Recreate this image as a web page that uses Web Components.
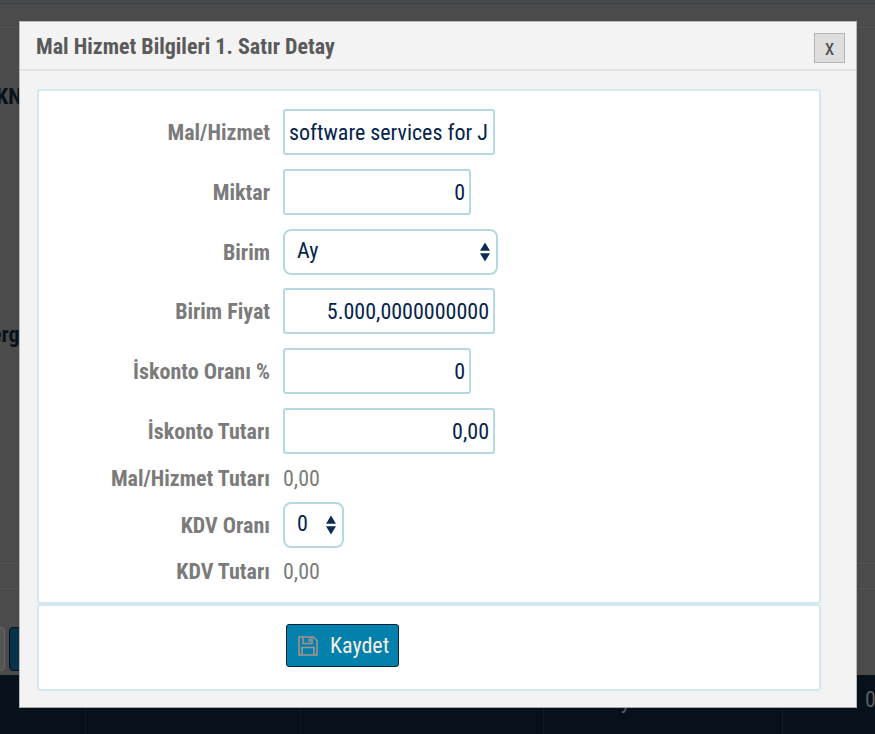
<!DOCTYPE html>
<html lang="tr">
<head>
<meta charset="utf-8">
<title>Mal Hizmet Bilgileri</title>
<style>
  html, body { margin: 0; padding: 0; }
  body { width: 875px; height: 734px; overflow: hidden; background: #4b4b4b; font-family: Roboto, "Liberation Sans", sans-serif; }
</style>
</head>
<body>
<page-backdrop></page-backdrop>
<detail-dialog heading="Mal Hizmet Bilgileri 1. Satır Detay">
  <form-row label="Mal/Hizmet"><text-box width="212" value="software services for J" align="left"></text-box></form-row>
  <form-row label="Miktar"><text-box width="188" value="0"></text-box></form-row>
  <form-row label="Birim"><select-box width="215" value="Ay"></select-box></form-row>
  <form-row label="Birim Fiyat"><text-box width="212" value="5.000,0000000000"></text-box></form-row>
  <form-row label="İskonto Oranı %"><text-box width="188" value="0"></text-box></form-row>
  <form-row label="İskonto Tutarı"><text-box width="212" value="0,00"></text-box></form-row>
  <form-row label="Mal/Hizmet Tutarı"><span class="plain">0,00</span></form-row>
  <form-row label="KDV Oranı"><select-box width="61" value="0"></select-box></form-row>
  <form-row label="KDV Tutarı"><span class="plain">0,00</span></form-row>
  <save-button slot="footer">Kaydet</save-button>
</detail-dialog>

<script>
const condensed = `font-family: "Roboto Condensed", Roboto, "Liberation Sans", sans-serif; font-stretch: 75%;`;

class PageBackdrop extends HTMLElement {
  constructor() {
    super();
    this.attachShadow({ mode: 'open' }).innerHTML = `
      <style>
        :host { display: block; position: absolute; inset: 0; overflow: hidden; background: #4b4b4b; }
        .top { height: 3px; background: #44484b; border-bottom: 1px solid #3a3e41; }
        .rule { position: absolute; left: 0; right: 0; height: 1px; background: #545454; }
        .foot { position: absolute; left: 0; right: 0; top: 675px; bottom: 0; background: #06111b; }
        .foot i { position: absolute; top: 0; bottom: 0; width: 1px; background: #0f1a24; }
        .txt { position: absolute; ${condensed} font-weight: 700; color: #07121c; font-size: 22px; }
        .btn { position: absolute; top: 627px; height: 44px; border-radius: 4px; box-sizing: border-box; }
        .grey { position: absolute; ${condensed} color: #5a5e62; font-size: 22px; }
      </style>
      <div class="top"></div>
      <div class="rule" style="top:27px"></div>
      <div class="rule" style="top:563px"></div>
      <div class="rule" style="top:588px"></div>
      <span class="txt" style="left:-4px;top:84px">KN</span>
      <span class="txt" style="left:-9px;top:322px">erg</span>
      <div class="btn" style="left:-20px;width:25px;background:#555;border:1px solid #666"></div>
      <div class="btn" style="left:9px;width:30px;background:#06334a;border:1px solid #03111c"></div>
      <div class="foot">
        <i style="left:85px"></i><i style="left:300px"></i><i style="left:543px"></i><i style="left:782px"></i>
      </div>
      <span class="grey" style="left:621px;top:688px">y</span>
      <span class="grey" style="left:865px;top:687px">0</span>
    `;
  }
}

class DetailDialog extends HTMLElement {
  constructor() {
    super();
    const shadow = this.attachShadow({ mode: 'open' });
    const heading = this.getAttribute('heading') || '';
    shadow.innerHTML = `
      <style>
        :host { display: flex; flex-direction: column; box-sizing: border-box; position: absolute; left: 19px; top: 21px; width: 838px; height: 687px; background: #f3f3f3; border: 1px solid #b8b8b8; border-bottom-color: #a8a8a8; }
        header { display: flex; align-items: center; justify-content: space-between; height: 49px; box-sizing: border-box; border-bottom: 2px solid #e2e2e2; padding: 2px 11px 0 16px; flex: none; }
        h1 { margin: 0; ${condensed} font-size: 22px; font-weight: 700; color: #5a5a5a; }
        button { width: 31px; height: 30px; margin-top: 3px; box-sizing: border-box; background: #dedede; border: 1px solid #b5b5b5; color: #4e4e4e; ${condensed} font-size: 22px; font-weight: 400; line-height: 24px; padding: 0; }
        .panel { background: #fff; border: 2px solid #d3e8f0; border-radius: 3px; margin: 0 35px 0 17px; box-sizing: border-box; flex: none; }
        .body { margin-top: 18px; height: 515px; padding: 18px 0 0; display: flex; flex-direction: column; gap: 13.8px; }
        .foot { height: 87px; display: flex; align-items: flex-start; padding: 18px 0 0 247px; }
      </style>
      <header><h1>${heading}</h1><button>x</button></header>
      <div class="panel body"><slot></slot></div>
      <div class="panel foot"><slot name="footer"></slot></div>
    `;
  }
}

class FormRow extends HTMLElement {
  constructor() {
    super();
    const shadow = this.attachShadow({ mode: 'open' });
    shadow.innerHTML = `
      <style>
        :host { display: grid; grid-template-columns: 231px auto; column-gap: 13px; align-items: center; justify-content: start; color: #7b7b7b; ${condensed} font-size: 22px; line-height: 22px; }
        label { text-align: right; font-weight: 700; color: #7b7b7b; white-space: nowrap; margin-bottom: -2px; }
        ::slotted(.plain) { color: #7b7b7b; font-weight: 400; margin-bottom: -2px; }
      </style>
      <label>${this.getAttribute('label')}</label>
      <slot></slot>
    `;
  }
}

class TextBox extends HTMLElement {
  constructor() {
    super();
    const shadow = this.attachShadow({ mode: 'open' });
    const width = this.getAttribute('width');
    const align = this.getAttribute('align') || 'right';
    shadow.innerHTML = `
      <style>
        :host { display: flex; align-items: center; box-sizing: border-box; width: ${width}px; height: 46px; background: #fff; border: 2px solid #b5d8e5; border-radius: 3px; padding: 2px 4px 0 4px; justify-content: ${align === 'left' ? 'flex-start' : 'flex-end'}; color: #04234b; ${condensed} font-size: 22px; overflow: hidden; white-space: nowrap; }
      </style>
      ${this.getAttribute('value')}
    `;
  }
}

class SelectBox extends HTMLElement {
  constructor() {
    super();
    const shadow = this.attachShadow({ mode: 'open' });
    shadow.innerHTML = `
      <style>
        :host { display: flex; align-items: center; justify-content: space-between; box-sizing: border-box; width: ${this.getAttribute('width')}px; height: 46px; background: #fff; border: 2px solid #b5d8e5; border-radius: 8px; padding: 0 5px 0 12px; color: #04234b; ${condensed} font-size: 22px; }
        span { padding-bottom: 2px; }
        svg { display: block; }
      </style>
      <span>${this.getAttribute('value')}</span>
      <svg width="12" height="20" viewBox="0 0 12 20"><path d="M6 0.5l5 8.2H1zM1 11.3h10l-5 8.2z" fill="#0b2c55"/></svg>
    `;
  }
}

class SaveButton extends HTMLElement {
  constructor() {
    super();
    this.attachShadow({ mode: 'open' }).innerHTML = `
      <style>
        :host { display: inline-flex; align-items: center; gap: 12px; box-sizing: border-box; height: 43px; width: 113px; padding: 0 10px 0 11px; background: #0380ab; border: 1px solid #04233f; border-radius: 3px; color: #f5efe2; ${condensed} font-size: 22px; }
        svg { display: block; flex: none; }
      </style>
      <svg width="20" height="20" viewBox="0 0 20 20" fill="none" stroke="#a8938a" stroke-width="1.5"><path d="M1 1h14.5L19 4.5V19H1z"/><path d="M5 1v6.5h9V1"/><path d="M10.5 2.5h2v3.500h-2z" fill="#a8938a" stroke="none"/><path d="M4 19v-7.500h12V19"/></svg>
      <slot></slot>
    `;
  }
}

customElements.define('page-backdrop', PageBackdrop);
customElements.define('detail-dialog', DetailDialog);
customElements.define('form-row', FormRow);
customElements.define('text-box', TextBox);
customElements.define('select-box', SelectBox);
customElements.define('save-button', SaveButton);
</script>
</body>
</html>
